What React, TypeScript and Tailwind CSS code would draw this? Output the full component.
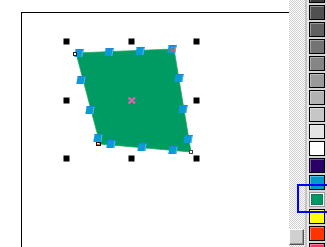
import React from "react";

const SWATCHES = [
  "#3a3a3a",
  "#505050",
  "#616161",
  "#737373",
  "#858585",
  "#999999",
  "#b2b2b2",
  "#c6c6c6",
  "#e4e4e4",
  "#ffffff",
  "#2b0066",
  "#0099cc",
  "#009966",
  "#ffff00",
  "#ff3300",
  "#ff3366",
];

const SELECTED = 12;

// bounding box handles
const HANDLES: [number, number][] = [
  [66.5, 41.5],
  [131.5, 41.5],
  [196.5, 41.5],
  [66.5, 100.5],
  [196.5, 100.5],
  [66.5, 158.5],
  [131.5, 158.5],
  [196.5, 158.5],
];

// path nodes along the edges
const NODES: [number, number][] = [
  [79, 53],
  [109, 52],
  [140, 51],
  [172, 49],
  [179, 78],
  [183, 109],
  [188, 139],
  [111, 144],
  [142, 147],
  [173, 150],
  [81, 80],
  [90, 110],
  [98, 138],
];

function Canvas() {
  return (
    <svg
      className="pointer-events-none absolute left-0 top-0"
      width={289}
      height={247}
      viewBox="0 0 289 247"
    >
      <polygon points="76,53 174,49 191,152 100,144" fill="#009b62" stroke="#19a85a" strokeWidth={0.8} />
      {HANDLES.map(([x, y], i) => (
        <rect key={i} x={x - 3} y={y - 3} width={6} height={6} fill="#000" />
      ))}
      {NODES.map(([x, y], i) => (
        <g key={i} transform={`translate(${x} ${y}) skewX(-10)`}>
          <rect x={-4} y={-4} width={8} height={8} fill="#0a9ad8" />
          <rect x={-4} y={-4} width={8} height={1} fill="#2a7fd8" />
          <rect x={3} y={-3} width={1} height={7} fill="#4fb8ea" />
        </g>
      ))}
      <rect x={171.5} y={47.5} width={3} height={3} fill="none" stroke="#e8602c" strokeWidth={1} />
      <rect x={73.5} y={52.5} width={3} height={3} fill="#fff" stroke="#222" strokeWidth={1} />
      <rect x={189.5} y={150.5} width={3} height={3} fill="#fff" stroke="#444" strokeWidth={1} />
      <rect x={96.5} y={141.5} width={4} height={3} fill="none" stroke="#e8602c" strokeWidth={1} />
      <rect x={96.5} y={142.5} width={4} height={3} fill="none" stroke="#111" strokeWidth={1} />
      <g stroke="#e461b2" strokeWidth={2.2}>
        <line x1={128.5} y1={97.5} x2={135} y2={103.5} />
        <line x1={135} y1={97.5} x2={128.5} y2={103.5} />
      </g>
    </svg>
  );
}

export default function App() {
  return (
    <div className="relative flex h-[247px] w-[327px] overflow-hidden bg-white font-['Liberation_Sans',sans-serif]">
      {/* Drawing area */}
      <div className="relative h-full w-[289px] bg-white pl-[21px] pt-[12px]">
        <div className="h-full w-full border-l border-t border-black" />
        <Canvas />
      </div>

      {/* Hatched gutter */}
      <div className="flex h-full w-[16px] flex-col justify-end bg-[image:repeating-conic-gradient(#cfcfcf_0%_25%,#ffffff_0%_50%)] bg-[length:2px_2px] pb-[2px]">
        <div className="h-[16px] w-[15px] border border-t-white border-l-white border-r-[#555] border-b-[#555] bg-[#d0d0d0] shadow-[inset_-1px_-1px_0_#999]" />
      </div>

      <div className="h-full w-[4px] border-l-2 border-[#c4c4c4] bg-[#e8e8e8]" />

      {/* Palette */}
      <div className="flex h-full w-[18px] flex-col bg-[#d4d4d4] pr-[2px]">
        <div className="-mt-[12px] flex flex-col gap-[2px]">
          {SWATCHES.map((c, i) =>
            i === SELECTED ? (
              <div key={c} className="h-[15px] w-[16px] border border-[#9a9a9a] bg-white p-[1px]">
                <div className="h-full w-full border border-dotted border-[#1f5f3f]" style={{ backgroundColor: c }} />
              </div>
            ) : (
              <div
                key={c}
                className="h-[15px] w-[16px] border border-black shadow-[inset_1px_1px_0_rgba(255,255,255,0.35)]"
                style={{ backgroundColor: c }}
              />
            )
          )}
        </div>
      </div>

      {/* Selection frame */}
      <div className="absolute left-[297px] top-[184px] h-[29px] w-[40px] border-2 border-[#0000ff]" />
    </div>
  );
}
